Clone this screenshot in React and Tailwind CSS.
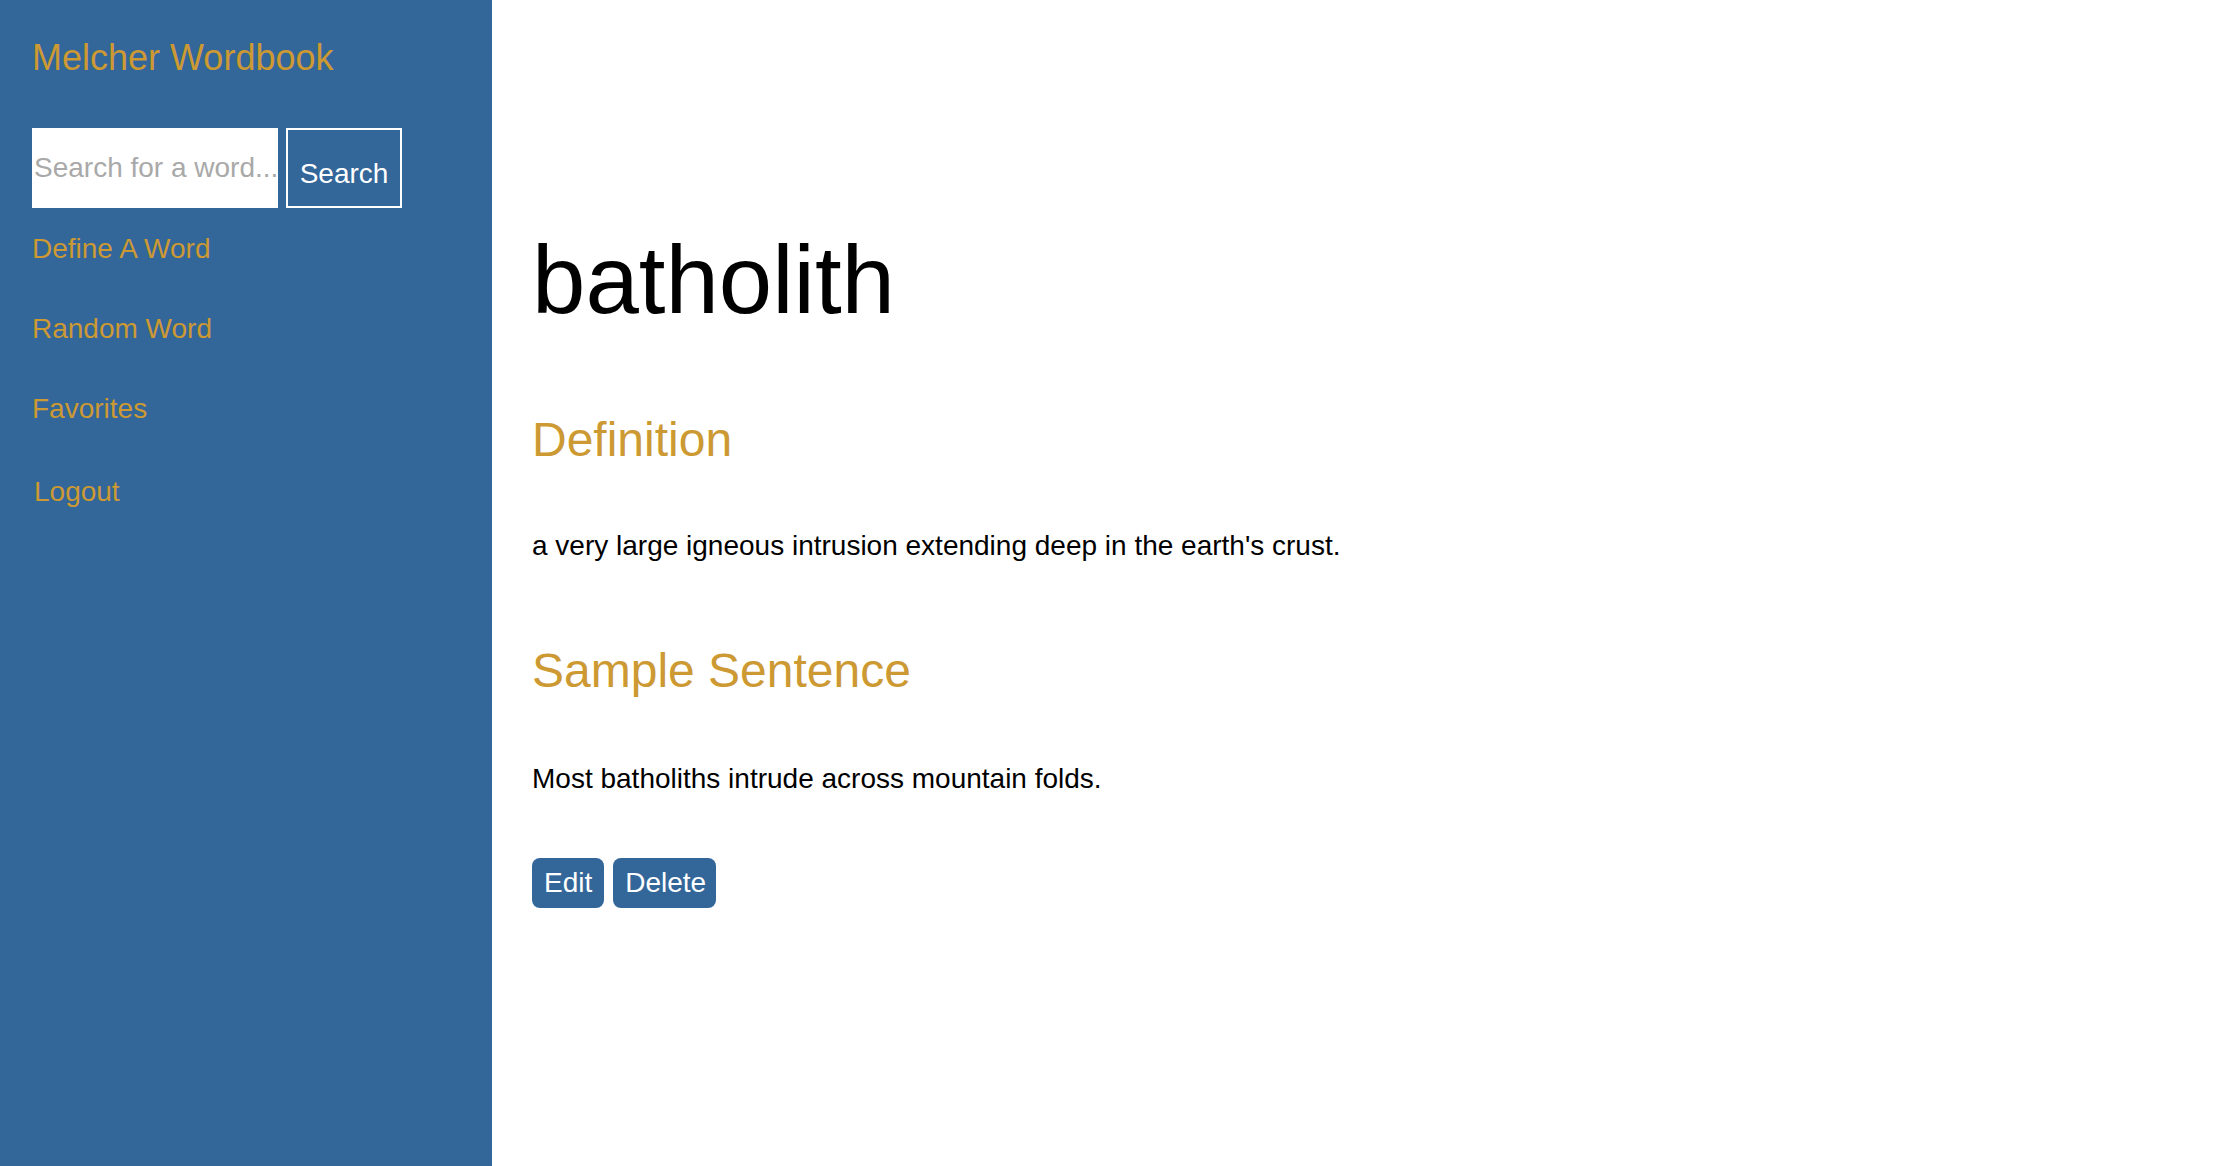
export default function App() {
  return (
    <div
      className="flex w-full min-h-screen bg-white"
      style={{ fontFamily: '"Liberation Sans", Arial, Helvetica, sans-serif' }}
    >
      <aside className="w-[492px] shrink-0 min-h-screen bg-[#336699] pl-8">
        <div className="pt-[38px] text-[36px] leading-[40px] text-[#cc9933]">
          Melcher Wordbook
        </div>
        <form
          className="mt-[50px] flex h-[80px] gap-2"
          onSubmit={(e) => e.preventDefault()}
        >
          <input
            type="text"
            placeholder="Search for a word..."
            className="h-[80px] w-[246px] bg-white pl-[2px] text-[28px] text-black placeholder:text-[#a9a9a9] outline-none"
          />
          <button
            type="submit"
            className="flex h-[80px] w-[116px] items-center justify-center border-2 border-white bg-[#336699] pt-[11px] text-[28px] leading-[32px] text-white"
          >
            Search
          </button>
        </form>
        <nav className="flex flex-col text-[28px] leading-[32px] text-[#cc9933]">
          <a href="#" className="mt-[25px]">Define A Word</a>
          <a href="#" className="mt-[48px]">Random Word</a>
          <a href="#" className="mt-[48px]">Favorites</a>
          <a href="#" className="mt-[51px] pl-[2px]">Logout</a>
        </nav>
      </aside>
      <main className="flex-1 pl-10">
        <h1 className="mt-[225px] text-[96px] leading-[110px] text-black">batholith</h1>
        <h2 className="mt-[77px] text-[48px] leading-[56px] text-[#cc9933]">Definition</h2>
        <p className="mt-[62px] text-[28px] leading-[32px] text-black">
          a very large igneous intrusion extending deep in the earth's crust.
        </p>
        <h2 className="mt-[81px] text-[48px] leading-[56px] text-[#cc9933]">Sample Sentence</h2>
        <p className="mt-[64px] text-[28px] leading-[32px] text-black">
          Most batholiths intrude across mountain folds.
        </p>
        <div className="mt-[63px] flex gap-[9px]">
          <button className="flex h-[50px] items-center rounded-lg bg-[#336699] px-3 text-[28px] leading-[32px] text-white">
            Edit
          </button>
          <button className="flex h-[50px] items-center rounded-lg bg-[#336699] pl-3 pr-[10px] text-[28px] leading-[32px] text-white">
            Delete
          </button>
        </div>
      </main>
    </div>
  );
}
